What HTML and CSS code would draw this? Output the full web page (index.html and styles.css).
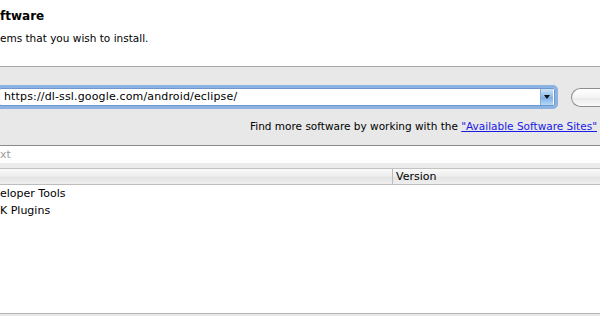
FILE: index.html
```html
<!DOCTYPE html>
<html lang="en">
<head>
    <meta charset="UTF-8">
    <title>Available Software</title>
    <link rel="stylesheet" href="styles.css">
</head>
<body>
    <div class="dialog">
        <div class="banner">
            <h1>ftware</h1>
            <p>ems that you wish to install.</p>
        </div>

        <div class="sites">
            <div class="site-row">
                <div class="combo">
                    <span class="combo-text">https://dl-ssl.google.com/android/eclipse/</span>
                    <span class="combo-arrow"><span class="tri"></span></span>
                </div>
                <div class="add-button"></div>
            </div>
            <div class="more">
                Find more software by working with the <a href="#">"Available Software Sites"</a>
            </div>
        </div>

        <div class="filter">xt</div>
        <div class="spacer"></div>

        <div class="table">
            <div class="table-head">
                <div class="col-name"></div>
                <div class="col-version">Version</div>
            </div>
            <div class="row">eloper Tools</div>
            <div class="row">K Plugins</div>
        </div>

        <div class="footer"></div>
    </div>
</body>
</html>
```

FILE: styles.css
```css
* {
    margin: 0;
    padding: 0;
    box-sizing: border-box;
}

body {
    font-family: 'Lucida Grande', 'DejaVu Sans', sans-serif;
    font-size: 11px;
    color: #000;
    background: #fff;
    width: 600px;
    height: 316px;
    overflow: hidden;
}

.dialog {
    display: flex;
    flex-direction: column;
    height: 316px;
}

.banner {
    height: 67px;
    border-bottom: 1px solid #a8a8a8;
    background: #fff;
}

.banner h1 {
    font-size: 12px;
    font-weight: bold;
    line-height: 16px;
    padding-top: 8px;
}

.banner p {
    font-size: 10.5px;
    line-height: 14px;
    padding-top: 7px;
}

.sites {
    height: 79px;
    background: #e8e8e8;
    border-bottom: 1px solid #8a8a8a;
    padding-top: 18px;
}

.site-row {
    display: flex;
    align-items: center;
    height: 24px;
}

.combo {
    width: 574px;
    height: 24px;
    margin-left: -4px;
    border: 3px solid #8cb3e2;
    border-radius: 5px;
    background: #fff;
    display: flex;
    align-items: center;
    box-shadow: inset 0 0 0 1px #6f97cc;
}

.combo-text {
    flex: 1;
    padding-left: 5px;
    line-height: 16px;
    letter-spacing: 0.15px;
}

.combo-arrow {
    width: 13px;
    height: 16px;
    margin-right: 2px;
    background: linear-gradient(#cfe3f8, #8fbbe9 50%, #7aaee6 51%, #b7d8f7);
    border-left: 1px solid #8aa9cf;
    display: flex;
    align-items: center;
    justify-content: center;
}

.tri {
    width: 0;
    height: 0;
    border-left: 3px solid transparent;
    border-right: 3px solid transparent;
    border-top: 4px solid #111;
}

.add-button {
    width: 30px;
    height: 19px;
    margin-left: 13px;
    border: 1px solid #8e8e8e;
    border-right: none;
    border-radius: 10px 0 0 10px;
    background: linear-gradient(#fff, #f4f4f4 50%, #e9e9e9 51%, #fafafa);
}

.more {
    font-size: 10.5px;
    text-align: right;
    padding-right: 3px;
    padding-top: 10px;
    line-height: 14px;
}

.more a {
    color: #1a1ae6;
    text-decoration: underline;
}

.filter {
    height: 17px;
    line-height: 17px;
    color: #9a9a9a;
    background: #fff;
}

.spacer {
    height: 6px;
    background: #ebebeb;
    border-bottom: 1px solid #c2c2c2;
}

.table {
    flex: 1;
    background: #fff;
}

.table-head {
    display: flex;
    height: 16px;
    background: linear-gradient(#fafafa, #ececec 50%, #e2e2e2 51%, #efefef);
    border-bottom: 1px solid #bdbdbd;
}

.col-name {
    width: 393px;
    border-right: 1px solid #bdbdbd;
}

.col-version {
    padding-left: 3px;
    line-height: 15px;
}

.row {
    height: 17px;
    line-height: 17px;
}

.row:first-of-type {
    margin-top: 2px;
}

.footer {
    height: 3px;
    border-top: 1px solid #b4b4b4;
    background: #e8e8e8;
}
```
